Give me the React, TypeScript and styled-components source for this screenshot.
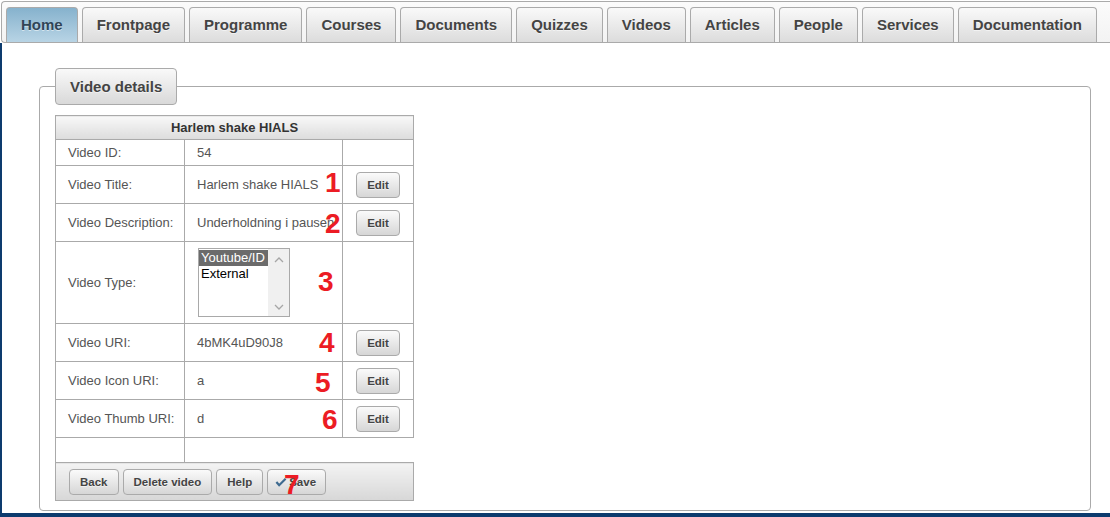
import React from "react";
import styled, { createGlobalStyle } from "styled-components";

const GlobalStyle = createGlobalStyle`
  html, body { margin: 0; padding: 0; background: #fff; }
  body { font-family: "Liberation Sans", Arial, sans-serif; }
  * { box-sizing: border-box; }
`;

const Page = styled.div`
  width: 1110px;
  height: 517px;
  display: flex;
  flex-direction: column;
  overflow: hidden;
  background: #fff;
`;

const TabBar = styled.ul`
  list-style: none;
  margin: 1px 0 0 1px;
  padding: 5px 0 0 4px;
  height: 42px;
  display: flex;
  gap: 4px;
  border: 1px solid #aaa;
  border-right: none;
  border-radius: 4px 0 0 4px;
  background: linear-gradient(#fbfbfb, #f3f3f3);
  flex-shrink: 0;
`;

const Tab = styled.li<{ $active?: boolean }>`
  display: flex;
  align-items: center;
  padding: 0 14px 2px;
  border: 1px solid #aaa;
  border-bottom: none;
  border-radius: 4px 4px 0 0;
  font-weight: bold;
  font-size: 15px;
  color: ${(p) => (p.$active ? "#2f4557" : "#444")};
  background: ${(p) =>
    p.$active
      ? "linear-gradient(#86b2cd, #b8d4e5)"
      : "linear-gradient(#f9f9f9, #dcdcdc)"};
  text-shadow: 0 1px 0 rgba(255, 255, 255, 0.55);
  white-space: nowrap;
`;

const Content = styled.div`
  flex: 1;
  display: flex;
  flex-direction: column;
  border-left: 2px solid #0d3b6e;
  border-bottom: 4px solid #0d3b6e;
  background: #fff;
`;

const Fieldset = styled.fieldset`
  margin: 25px 19px 0 37px;
  padding: 10px 15px 9px;
  border: 1px solid #aaa;
  border-radius: 4px;
  min-width: 0;
`;

const Legend = styled.legend`
  padding: 0 14px;
  height: 37px;
  line-height: 35px;
  border: 1px solid #aaa;
  border-radius: 4px;
  background: linear-gradient(#f9f9f9, #d9d9d9);
  font-weight: bold;
  font-size: 15px;
  color: #444;
  text-shadow: 0 1px 0 rgba(255, 255, 255, 0.55);
`;

const Table = styled.table`
  border-collapse: collapse;
  width: 358px;
  font-size: 13px;
  color: #555;
  table-layout: fixed;
`;

const HeadCell = styled.th`
  height: 24px;
  border: 1px solid #aaa;
  background: linear-gradient(#f8f8f8, #dcdcdc);
  font-weight: bold;
  font-size: 13px;
  color: #333;
  text-align: center;
  padding: 0;
`;

const Row = styled.tr<{ $h: number }>`
  height: ${(p) => p.$h}px;
`;

const Cell = styled.td<{ $open?: boolean }>`
  position: relative;
  border: 1px solid #aaa;
  ${(p) => (p.$open ? "border-right: none;" : "")}
  padding: 0 0 0 12px;
  vertical-align: middle;
  white-space: nowrap;
`;

const ButtonCell = styled.td`
  border: 1px solid #aaa;
  padding: 0;
  text-align: center;
  vertical-align: middle;
`;

const Button = styled.button`
  display: inline-flex;
  align-items: center;
  justify-content: center;
  gap: 3px;
  height: 26px;
  padding: 0 10px;
  border: 1px solid #aaa;
  border-radius: 4px;
  background: linear-gradient(#fafafa, #d6d6d6);
  font-family: "Liberation Sans", Arial, sans-serif;
  font-weight: bold;
  font-size: 11.5px;
  color: #444;
  text-shadow: 0 1px 0 rgba(255, 255, 255, 0.5);
  cursor: pointer;
`;

const SaveButton = styled(Button)`
  padding: 0 9px 0 7px;
  gap: 2px;
`;

const FooterCell = styled.td`
  position: relative;
  height: 38px;
  border: 1px solid #aaa;
  background: linear-gradient(#f3f3f3, #d7d7d7);
  padding: 0 0 0 13px;
  vertical-align: middle;
`;

const FooterBar = styled.div`
  display: flex;
  gap: 4px;
`;

const Annotation = styled.span<{ $left: number; $dy: number }>`
  position: absolute;
  left: ${(p) => p.$left}px;
  top: 50%;
  transform: translateY(calc(-50% + ${(p) => p.$dy}px));
  font-family: "Liberation Sans", Arial, sans-serif;
  font-weight: bold;
  font-size: 28px;
  line-height: 1;
  color: #ec1c24;
  pointer-events: none;
`;

const ListBox = styled.div`
  margin-left: 1px;
  width: 92px;
  height: 69px;
  border: 1px solid #a9a9a9;
  display: flex;
  background: #fff;
`;

const Options = styled.div`
  flex: 1;
  padding-top: 1px;
  font-size: 13px;
  color: #000;
`;

const Option = styled.div<{ $selected?: boolean }>`
  height: 16px;
  line-height: 16px;
  padding-left: 2px;
  background: ${(p) => (p.$selected ? "#6b6b6b" : "transparent")};
  color: ${(p) => (p.$selected ? "#fff" : "#000")};
`;

const ScrollTrack = styled.div`
  width: 21px;
  background: #f0f0f0;
  display: flex;
  flex-direction: column;
  justify-content: space-between;
  align-items: center;
  padding: 8px 0 6px;
`;

const Chevron = ({ down }: { down?: boolean }) => (
  <svg width="10" height="6" viewBox="0 0 10 6">
    <polyline
      points={down ? "1,1 5,5 9,1" : "1,5 5,1 9,5"}
      fill="none"
      stroke="#a6a6a6"
      strokeWidth="1.3"
    />
  </svg>
);

const Check = () => (
  <svg width="12" height="10" viewBox="0 0 13 10">
    <polyline
      points="1.5,5 4.5,8.5 11.5,1.5"
      fill="none"
      stroke="#3f6b90"
      strokeWidth="2.4"
    />
  </svg>
);

const tabs = [
  "Home",
  "Frontpage",
  "Programme",
  "Courses",
  "Documents",
  "Quizzes",
  "Videos",
  "Articles",
  "People",
  "Services",
  "Documentation",
];

type Field = {
  label: string;
  value?: string;
  edit: boolean;
  h: number;
  mark?: { n: string; left: number; dy: number };
};

const fields: Field[] = [
  { label: "Video ID:", value: "54", edit: false, h: 26 },
  { label: "Video Title:", value: "Harlem shake HIALS", edit: true, h: 38, mark: { n: "1", left: 140, dy: -2 } },
  { label: "Video Description:", value: "Underholdning i pausen", edit: true, h: 38, mark: { n: "2", left: 140, dy: 1 } },
];

const fields2: Field[] = [
  { label: "Video URI:", value: "4bMK4uD90J8", edit: true, h: 38, mark: { n: "4", left: 134, dy: 0 } },
  { label: "Video Icon URI:", value: "a", edit: true, h: 38, mark: { n: "5", left: 130, dy: 2 } },
  { label: "Video Thumb URI:", value: "d", edit: true, h: 38, mark: { n: "6", left: 137, dy: 1 } },
];

const FieldRow = ({ f }: { f: Field }) => (
  <Row $h={f.h}>
    <Cell>{f.label}</Cell>
    <Cell>
      {f.value}
      {f.mark && (
        <Annotation $left={f.mark.left} $dy={f.mark.dy}>
          {f.mark.n}
        </Annotation>
      )}
    </Cell>
    <ButtonCell>{f.edit && <Button>Edit</Button>}</ButtonCell>
  </Row>
);

export default function App() {
  return (
    <Page>
      <GlobalStyle />
      <TabBar>
        {tabs.map((t, i) => (
          <Tab key={t} $active={i === 0}>
            {t}
          </Tab>
        ))}
      </TabBar>
      <Content>
        <Fieldset>
          <Legend>Video details</Legend>
          <Table>
            <colgroup>
              <col style={{ width: 129 }} />
              <col style={{ width: 158 }} />
              <col style={{ width: 71 }} />
            </colgroup>
            <thead>
              <tr>
                <HeadCell colSpan={3}>Harlem shake HIALS</HeadCell>
              </tr>
            </thead>
            <tbody>
              {fields.map((f) => (
                <FieldRow key={f.label} f={f} />
              ))}
              <Row $h={82}>
                <Cell>Video Type:</Cell>
                <Cell>
                  <ListBox>
                    <Options>
                      <Option $selected>Youtube/ID</Option>
                      <Option>External</Option>
                    </Options>
                    <ScrollTrack>
                      <Chevron />
                      <Chevron down />
                    </ScrollTrack>
                  </ListBox>
                  <Annotation $left={133} $dy={-1}>
                    3
                  </Annotation>
                </Cell>
                <ButtonCell />
              </Row>
              {fields2.map((f) => (
                <FieldRow key={f.label} f={f} />
              ))}
              <Row $h={25}>
                <Cell />
                <Cell colSpan={2} $open />
              </Row>
            </tbody>
            <tfoot>
              <tr>
                <FooterCell colSpan={3}>
                  <FooterBar>
                    <Button>Back</Button>
                    <Button>Delete video</Button>
                    <Button>Help</Button>
                    <SaveButton>
                      <Check />
                      Save
                    </SaveButton>
                  </FooterBar>
                  <Annotation $left={228} $dy={3}>
                    7
                  </Annotation>
                </FooterCell>
              </tr>
            </tfoot>
          </Table>
        </Fieldset>
      </Content>
    </Page>
  );
}
